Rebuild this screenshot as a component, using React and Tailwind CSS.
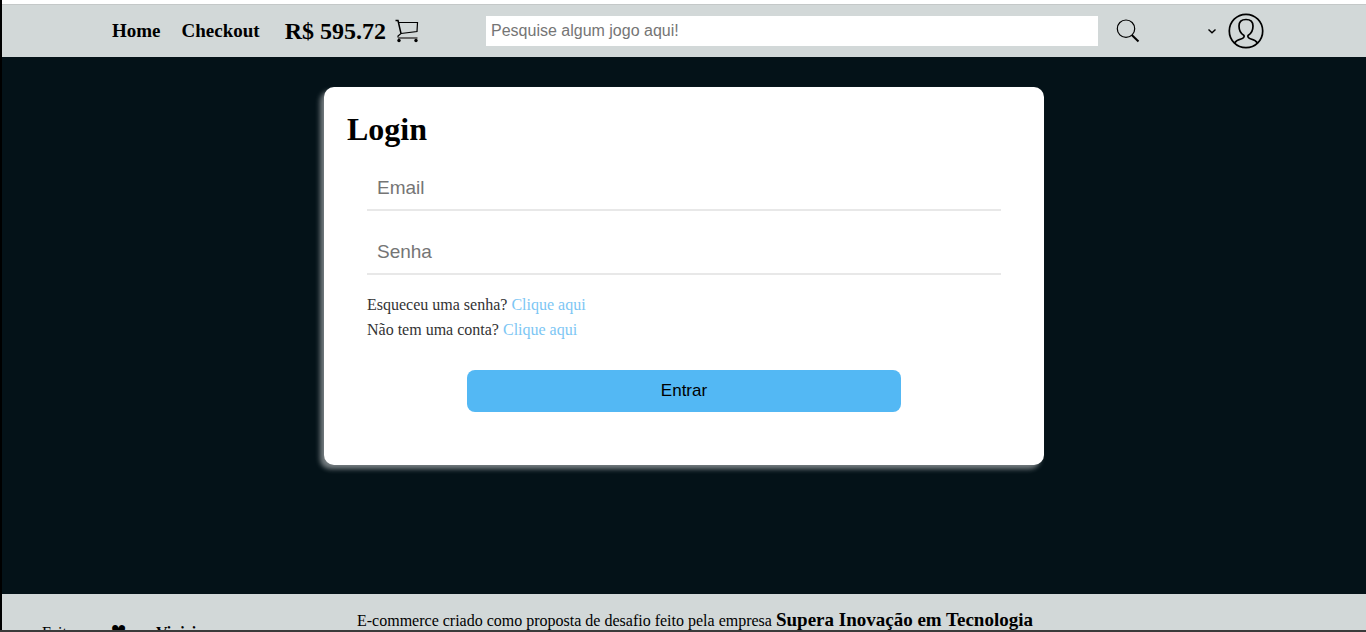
function CartIcon() {
  return (
    <svg viewBox="0 0 24 24" className="size-6" fill="none" stroke="#000" aria-hidden="true">
      <path d="M0.500 1.500H3L6 14.500" strokeWidth="1.500" />
      <path d="M3.500 3.500H22.500L22 12.500L6 14.500L3 17V18.500" strokeWidth="1.200" />
      <path d="M3 19H22.500" strokeWidth="2" stroke="#666" />
      <circle cx="4" cy="21.500" r="1.700" fill="#000" stroke="none" />
      <circle cx="21" cy="21.500" r="1.700" fill="#000" stroke="none" />
    </svg>
  );
}

function SearchIcon() {
  return (
    <svg viewBox="0 0 24 24" className="size-6" fill="none" stroke="#000" aria-hidden="true">
      <circle cx="10" cy="9.700" r="8.700" strokeWidth="1.200" />
      <path d="M15.800 16L22.500 22.500" strokeWidth="2" />
    </svg>
  );
}

function UserIcon() {
  return (
    <svg viewBox="0 0 36 36" className="size-9" fill="none" stroke="#000" strokeWidth="1.700" aria-hidden="true">
      <circle cx="18" cy="18" r="16.700" />
      <path d="M6.500 30C8 27.500 10 26.800 13 26C15.500 25.300 16.500 24 16 22.500C12.500 20.500 11 17.500 11 13C11 8.500 13.500 6.500 18 6.500S25 8.500 25 13C25 17.500 23.500 20.500 20 22.500C19.500 24 20.500 25.300 23 26C26 26.800 28 27.500 29.500 30" />
    </svg>
  );
}

function Header() {
  return (
    <header className="flex h-[53px] items-center border-t border-[#c4c8c8] bg-[#d2d8d8] pl-[110px] pr-[102px]">
      <nav className="flex items-center gap-[21px] text-[19px] font-bold">
        <a href="#home">Home</a>
        <a href="#checkout">Checkout</a>
      </nav>
      <a href="#cart" className="ml-[25px] flex items-center gap-[9px] text-2xl font-bold">
        R$ 595.72
        <CartIcon />
      </a>
      <form className="ml-[67px] flex flex-1 items-center gap-[18px]" onSubmit={(e) => e.preventDefault()}>
        <input
          type="search"
          aria-label="Pesquisar jogo"
          placeholder="Pesquise algum jogo aqui!"
          className="h-[30px] min-w-0 flex-1 bg-white px-[5px] font-['Liberation_Sans',Arial,sans-serif] text-base outline-none placeholder:text-[#757575]"
        />
        <button type="submit" aria-label="Buscar">
          <SearchIcon />
        </button>
      </form>
      <button type="button" aria-label="Minha conta" className="ml-[67px] flex items-center gap-[11px]">
        <svg viewBox="0 0 10 10" className="size-2.5" fill="none" stroke="#000" strokeWidth="1.400" aria-hidden="true">
          <path d="M1.500 3.500L5 6.800L8.500 3.500" />
        </svg>
        <UserIcon />
      </button>
    </header>
  );
}

function Field({ type, label }) {
  return (
    <input
      type={type}
      aria-label={label}
      placeholder={label}
      className="h-12 w-full border-b-2 border-[#e8e8e8] px-2.5 pt-[3px] font-['Liberation_Sans',Arial,sans-serif] text-[19px] outline-none placeholder:text-[#757575]"
    />
  );
}

function LoginCard() {
  return (
    <form
      onSubmit={(e) => e.preventDefault()}
      className="mx-4 w-full max-w-[720px] rounded-[10px] bg-white pt-[22px] pb-[53px] shadow-[-4px_4px_5px_rgba(255,255,255,0.45)]"
    >
      <h1 className="px-[23px] text-[32px] leading-10 font-bold">Login</h1>
      <div className="flex flex-col px-[43px] pt-[14px]">
        <div className="flex flex-col gap-4">
          <Field type="email" label="Email" />
          <Field type="password" label="Senha" />
        </div>
        <div className="mt-[17px] text-base leading-[25px] text-[#333]">
          <p>
            Esqueceu uma senha? <a href="#senha" className="text-[#7cc6f4]">Clique aqui</a>
          </p>
          <p>
            Não tem uma conta? <a href="#conta" className="text-[#7cc6f4]">Clique aqui</a>
          </p>
        </div>
        <button
          type="submit"
          className="mx-[100px] mt-[28px] h-[42px] rounded-lg bg-[#53b8f4] font-['Liberation_Sans',Arial,sans-serif] text-[17px]"
        >
          Entrar
        </button>
      </div>
    </form>
  );
}

function Footer() {
  return (
    <footer className="flex h-9 items-start overflow-hidden bg-[#d2d8d8] pl-10 text-base">
      <p className="mt-[27px] w-[315px] shrink-0 leading-6">
        Feito com <span className="font-['DejaVu_Sans',sans-serif] text-lg leading-none">♥</span> por <strong>Vinicius</strong>
      </p>
      <p className="mt-[14px] leading-6 whitespace-nowrap">
        E-commerce criado como proposta de desafio feito pela empresa{" "}
        <strong className="text-[19px]">Supera Inovação em Tecnologia</strong>
      </p>
    </footer>
  );
}

export default function App() {
  return (
    <div className="flex h-screen flex-col border-b-2 border-[#3b3b3b] bg-white font-['Liberation_Serif','Times_New_Roman',serif] text-black">
      <div className="flex min-h-0 flex-1 flex-col border-l-2 border-black pt-1">
        <Header />
        <main className="flex min-h-0 flex-1 items-start justify-center bg-[#041218] pt-[30px]">
          <LoginCard />
        </main>
        <Footer />
      </div>
    </div>
  );
}
